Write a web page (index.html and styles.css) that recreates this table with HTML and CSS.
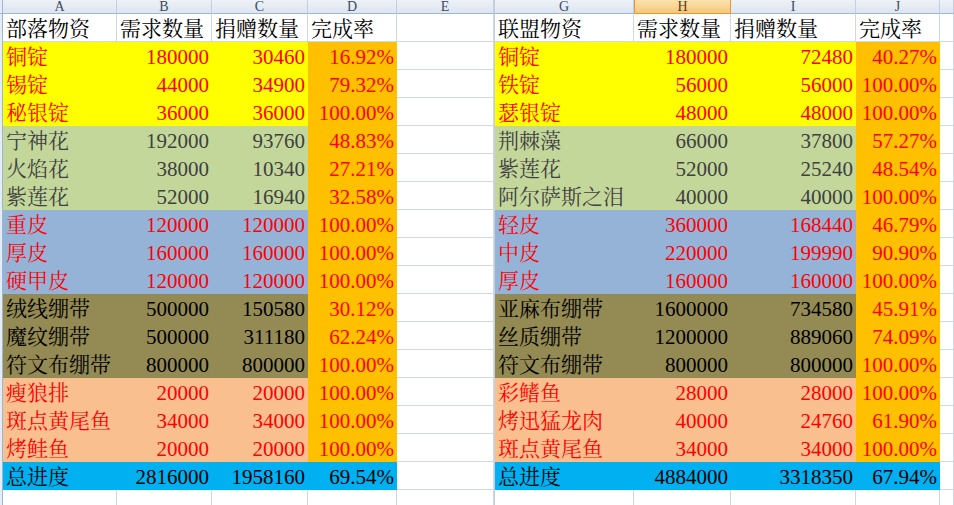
FILE: index.html
```html
<!DOCTYPE html>
<html lang="zh-CN">
<head>
<meta charset="utf-8">
<title>物资统计</title>
<link rel="stylesheet" href="styles.css">
</head>
<body>
<div class="sheet">
  <div class="hd rh"></div>
  <div class="hd"><span>A</span></div>
  <div class="hd"><span>B</span></div>
  <div class="hd"><span>C</span></div>
  <div class="hd"><span>D</span></div>
  <div class="hd"><span>E</span></div>
  <div class="hd f"></div>
  <div class="hd"><span>G</span></div>
  <div class="hd sel"><span>H</span></div>
  <div class="hd"><span>I</span></div>
  <div class="hd"><span>J</span></div>
  <div class="hd"></div>

  <div class="rh"></div>
  <div class="c">部落物资</div><div class="c">需求数量</div><div class="c">捐赠数量</div><div class="c">完成率</div>
  <div class="c"></div><div class="f"></div>
  <div class="c">联盟物资</div><div class="c">需求数量</div><div class="c">捐赠数量</div><div class="c">完成率</div>
  <div class="c"></div>

  <div class="rh"></div>
  <div class="c y red">铜锭</div><div class="c y red r">180000</div><div class="c y red r">30460</div><div class="c or red r">16.92%</div>
  <div class="c"></div><div class="f"></div>
  <div class="c y red">铜锭</div><div class="c y red r">180000</div><div class="c y red r">72480</div><div class="c or red r">40.27%</div>
  <div class="c"></div>

  <div class="rh"></div>
  <div class="c y red">锡锭</div><div class="c y red r">44000</div><div class="c y red r">34900</div><div class="c or red r">79.32%</div>
  <div class="c"></div><div class="f"></div>
  <div class="c y red">铁锭</div><div class="c y red r">56000</div><div class="c y red r">56000</div><div class="c or red r">100.00%</div>
  <div class="c"></div>

  <div class="rh"></div>
  <div class="c y red">秘银锭</div><div class="c y red r">36000</div><div class="c y red r">36000</div><div class="c or red r">100.00%</div>
  <div class="c"></div><div class="f"></div>
  <div class="c y red">瑟银锭</div><div class="c y red r">48000</div><div class="c y red r">48000</div><div class="c or red r">100.00%</div>
  <div class="c"></div>

  <div class="rh"></div>
  <div class="c g gray">宁神花</div><div class="c g gray r">192000</div><div class="c g gray r">93760</div><div class="c or red r">48.83%</div>
  <div class="c"></div><div class="f"></div>
  <div class="c g gray">荆棘藻</div><div class="c g gray r">66000</div><div class="c g gray r">37800</div><div class="c or red r">57.27%</div>
  <div class="c"></div>

  <div class="rh"></div>
  <div class="c g gray">火焰花</div><div class="c g gray r">38000</div><div class="c g gray r">10340</div><div class="c or red r">27.21%</div>
  <div class="c"></div><div class="f"></div>
  <div class="c g gray">紫莲花</div><div class="c g gray r">52000</div><div class="c g gray r">25240</div><div class="c or red r">48.54%</div>
  <div class="c"></div>

  <div class="rh"></div>
  <div class="c g gray">紫莲花</div><div class="c g gray r">52000</div><div class="c g gray r">16940</div><div class="c or red r">32.58%</div>
  <div class="c"></div><div class="f"></div>
  <div class="c g gray">阿尔萨斯之泪</div><div class="c g gray r">40000</div><div class="c g gray r">40000</div><div class="c or red r">100.00%</div>
  <div class="c"></div>

  <div class="rh"></div>
  <div class="c b red">重皮</div><div class="c b red r">120000</div><div class="c b red r">120000</div><div class="c or red r">100.00%</div>
  <div class="c"></div><div class="f"></div>
  <div class="c b red">轻皮</div><div class="c b red r">360000</div><div class="c b red r">168440</div><div class="c or red r">46.79%</div>
  <div class="c"></div>

  <div class="rh"></div>
  <div class="c b red">厚皮</div><div class="c b red r">160000</div><div class="c b red r">160000</div><div class="c or red r">100.00%</div>
  <div class="c"></div><div class="f"></div>
  <div class="c b red">中皮</div><div class="c b red r">220000</div><div class="c b red r">199990</div><div class="c or red r">90.90%</div>
  <div class="c"></div>

  <div class="rh"></div>
  <div class="c b red">硬甲皮</div><div class="c b red r">120000</div><div class="c b red r">120000</div><div class="c or red r">100.00%</div>
  <div class="c"></div><div class="f"></div>
  <div class="c b red">厚皮</div><div class="c b red r">160000</div><div class="c b red r">160000</div><div class="c or red r">100.00%</div>
  <div class="c"></div>

  <div class="rh"></div>
  <div class="c o">绒线绷带</div><div class="c o r">500000</div><div class="c o r">150580</div><div class="c or red r">30.12%</div>
  <div class="c"></div><div class="f"></div>
  <div class="c o">亚麻布绷带</div><div class="c o r">1600000</div><div class="c o r">734580</div><div class="c or red r">45.91%</div>
  <div class="c"></div>

  <div class="rh"></div>
  <div class="c o">魔纹绷带</div><div class="c o r">500000</div><div class="c o r">311180</div><div class="c or red r">62.24%</div>
  <div class="c"></div><div class="f"></div>
  <div class="c o">丝质绷带</div><div class="c o r">1200000</div><div class="c o r">889060</div><div class="c or red r">74.09%</div>
  <div class="c"></div>

  <div class="rh"></div>
  <div class="c o">符文布绷带</div><div class="c o r">800000</div><div class="c o r">800000</div><div class="c or red r">100.00%</div>
  <div class="c"></div><div class="f"></div>
  <div class="c o">符文布绷带</div><div class="c o r">800000</div><div class="c o r">800000</div><div class="c or red r">100.00%</div>
  <div class="c"></div>

  <div class="rh"></div>
  <div class="c p red">瘦狼排</div><div class="c p red r">20000</div><div class="c p red r">20000</div><div class="c or red r">100.00%</div>
  <div class="c"></div><div class="f"></div>
  <div class="c p red">彩鳍鱼</div><div class="c p red r">28000</div><div class="c p red r">28000</div><div class="c or red r">100.00%</div>
  <div class="c"></div>

  <div class="rh"></div>
  <div class="c p red">斑点黄尾鱼</div><div class="c p red r">34000</div><div class="c p red r">34000</div><div class="c or red r">100.00%</div>
  <div class="c"></div><div class="f"></div>
  <div class="c p red">烤迅猛龙肉</div><div class="c p red r">40000</div><div class="c p red r">24760</div><div class="c or red r">61.90%</div>
  <div class="c"></div>

  <div class="rh"></div>
  <div class="c p red">烤鲑鱼</div><div class="c p red r">20000</div><div class="c p red r">20000</div><div class="c or red r">100.00%</div>
  <div class="c"></div><div class="f"></div>
  <div class="c p red">斑点黄尾鱼</div><div class="c p red r">34000</div><div class="c p red r">34000</div><div class="c or red r">100.00%</div>
  <div class="c"></div>

  <div class="rh"></div>
  <div class="c cy">总进度</div><div class="c cy r">2816000</div><div class="c cy r">1958160</div><div class="c cy r">69.54%</div>
  <div class="c"></div><div class="f"></div>
  <div class="c cy">总进度</div><div class="c cy r">4884000</div><div class="c cy r">3318350</div><div class="c cy r">67.94%</div>
  <div class="c"></div>

  <div class="rh"></div>
  <div class="c"></div><div class="c"></div><div class="c"></div><div class="c"></div>
  <div class="c"></div><div class="f"></div>
  <div class="c"></div><div class="c"></div><div class="c"></div><div class="c"></div>
  <div class="c"></div>
</div>
</body>
</html>
```

FILE: styles.css
```css
html, body {
  margin: 0;
  padding: 0;
  background: #ffffff;
  overflow: hidden;
}

.sheet {
  display: grid;
  grid-template-columns: 3px 114px 95px 96px 89px 97px 1px 139px 97px 125px 84px 1fr;
  grid-auto-rows: 28px;
  grid-template-rows: 14px;
  width: 954px;
  height: 505px;
  overflow: hidden;
}

.hd {
  box-sizing: border-box;
  height: 14px;
  background: linear-gradient(#eef2f8, #dde5f1);
  border-right: 1px solid #c3cfdf;
  border-bottom: 1px solid #9eb6ce;
  font-family: "Liberation Serif", "Times New Roman", serif;
  font-size: 14px;
  line-height: 13px;
  color: #3b4a60;
  text-align: center;
}

.hd span {
  display: block;
}

.hd.sel {
  background: linear-gradient(#fbe2b0, #f5c77a);
  border-right-color: #f29436;
  border-bottom-color: #f29436;
  border-left: 1px solid #f29436;
  color: #5a3e14;
}

.hd.rh {
  background: #e4ecf7;
  border-right: 1px solid #9eb6ce;
}

.rh {
  box-sizing: border-box;
  background: #e4ecf7;
  border-right: 1px solid #9eb6ce;
}

.f {
  background: #c6cfdd;
}

.c {
  box-sizing: border-box;
  height: 28px;
  padding: 4px 2px 0 3px;
  border-right: 1px solid #d0d7e5;
  border-bottom: 1px solid #d0d7e5;
  font-family: "Liberation Serif", "Noto Serif CJK SC", "Noto Sans CJK SC", serif;
  font-size: 21px;
  line-height: 23px;
  color: #000000;
  white-space: nowrap;
  overflow: hidden;
}

.r { text-align: right; }

.red { color: #ff0000; }
.gray { color: #404040; }

.y  { background: #ffff00; border-color: #ffff00; }
.g  { background: #c4d79b; border-color: #c4d79b; }
.b  { background: #95b3d7; border-color: #95b3d7; }
.o  { background: #948a54; border-color: #948a54; }
.p  { background: #fabf8f; border-color: #fabf8f; }
.or { background: #ffc000; border-color: #ffc000; }
.cy { background: #00b0f0; border-color: #00b0f0; }
```
